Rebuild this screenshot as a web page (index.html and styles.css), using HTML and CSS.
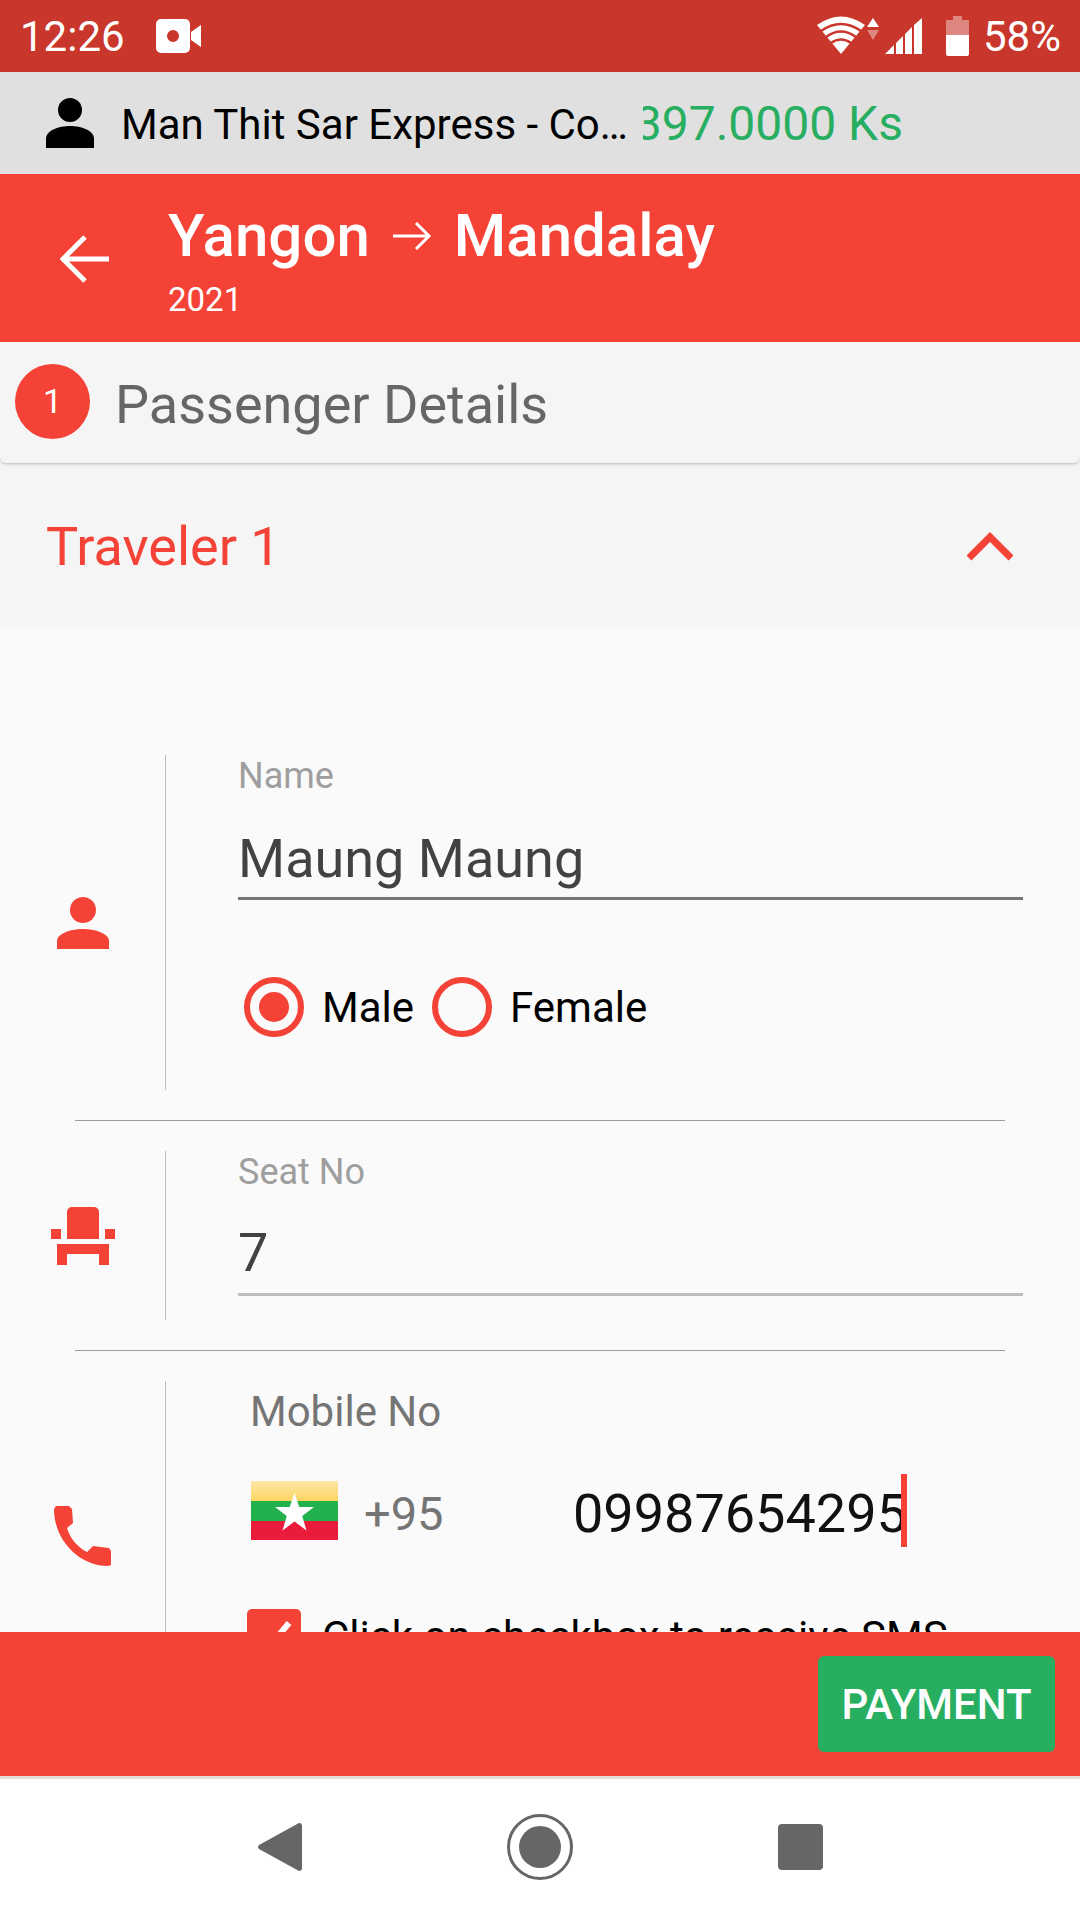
FILE: index.html
```html
<!DOCTYPE html>
<html lang="en">
<head>
    <meta charset="UTF-8">
    <meta name="viewport" content="width=device-width, initial-scale=1.0">
    <title>Passenger Details</title>
    <link rel="stylesheet" href="styles.css">
</head>
<body>
    <div class="phone">
        <div class="status-bar">
            <span class="clock">12:26</span>
            <svg class="video-icon" width="46" height="34" viewBox="0 0 46 34">
                <path fill="#fff" fill-rule="evenodd" d="M5 0h24a5 5 0 0 1 5 5v24a5 5 0 0 1-5 5H5a5 5 0 0 1-5-5V5a5 5 0 0 1 5-5zM17 11a6 6 0 1 0 0 12 6 6 0 0 0 0-12z"/>
                <path fill="#fff" d="M35 13l10-7v22l-10-7z"/>
            </svg>
            <div class="status-right">
                <svg width="62" height="40" viewBox="0 0 62 40">
                    <path fill="#fff" d="M0 9Q24-8 48 9L24 38z"/>
                    <path fill="none" stroke="#c9372c" stroke-width="2.5" d="M4 15Q24 1 44 15M9 21Q24 10 39 21M14 27Q24 20 34 27"/>
                    <path fill="#fff" d="M56 2l6 9H50z"/>
                    <path fill="#fff" opacity=".4" d="M50 14h12l-6 10z"/>
                </svg>
                <svg class="signal" width="37" height="36" viewBox="0 0 37 36">
                    <path fill="#fff" d="M0 36L9 27v9zM11 25l7-7v18h-7zM20 16l7-7v27h-7zM29 7l8-7v36h-8z"/>
                </svg>
                <svg class="battery" width="23" height="40" viewBox="0 0 23 40">
                    <path fill="#fff" opacity=".4" d="M7 0h9v4h7v15H0V4h7z"/>
                    <path fill="#fff" d="M0 19h23v19a2 2 0 0 1-2 2H2a2 2 0 0 1-2-2z"/>
                </svg>
                <span class="percent">58%</span>
            </div>
        </div>

        <div class="account-bar">
            <svg class="account-icon" width="50" height="50" viewBox="0 0 50 50">
                <ellipse cx="25" cy="12" rx="12" ry="12"/>
                <path d="M1 50V41C1 32 14 28 25 28S49 32 49 41V50z"/>
            </svg>
            <span class="account-name">Man Thit Sar Express - Co…</span>
            <div class="balance"><span>397.0000 Ks</span></div>
        </div>

        <div class="route-header">
            <svg class="back-arrow" width="50" height="48" viewBox="0 0 50 48">
                <path fill="none" stroke="#fff" stroke-width="5" d="M49 24H4M25 2L3 24l22 22"/>
            </svg>
            <div class="route-text">
                <div class="route-title">
                    <span>Yangon</span>
                    <svg width="40" height="30" viewBox="0 0 40 30">
                        <path fill="none" stroke="#fff" stroke-width="3" d="M1 15h36M24 2l13 13-13 13"/>
                    </svg>
                    <span>Mandalay</span>
                </div>
                <div class="route-date">2021</div>
            </div>
        </div>

        <div class="step-row">
            <span class="step-number">1</span>
            <span class="step-title">Passenger Details</span>
        </div>

        <div class="traveler-row">
            <span>Traveler 1</span>
            <svg width="46" height="30" viewBox="0 0 46 30">
                <path fill="none" stroke="#f44336" stroke-width="7" d="M2 27L23 6l21 21"/>
            </svg>
        </div>

        <div class="form-area">
            <div class="field-row">
                <div class="icon-col">
                    <svg width="54" height="52" viewBox="0 0 54 52">
                        <ellipse cx="27" cy="13" rx="13" ry="13" fill="#f44336"/>
                        <path fill="#f44336" d="M1 52V44C1 37 14 32 27 32s26 5 26 12v8z"/>
                    </svg>
                </div>
                <div class="field-body">
                    <div class="field-label">Name</div>
                    <div class="field-input dark-line">Maung Maung</div>
                    <div class="gender-row">
                        <span class="radio checked"></span>
                        <span class="radio-label">Male</span>
                        <span class="radio"></span>
                        <span class="radio-label">Female</span>
                    </div>
                </div>
            </div>

            <div class="row-line"></div>

            <div class="field-row seat-row">
                <div class="icon-col">
                    <svg width="64" height="58" viewBox="0 0 64 58">
                        <path fill="#f44336" d="M16 5a5 5 0 0 1 5-5h22a5 5 0 0 1 5 5v27H16zM0 22h10v10H0zM54 22h10v10H54zM6 37h52v21H48V47H16v11H6z"/>
                    </svg>
                </div>
                <div class="field-body">
                    <div class="field-label">Seat No</div>
                    <div class="field-input seat-input">7</div>
                </div>
            </div>

            <div class="row-line"></div>

            <div class="field-row mobile-row">
                <div class="icon-col">
                    <svg width="58" height="60" viewBox="0 0 58 60">
                        <path fill="#f44336" d="M2 0h13l3 3 1 14-6 5c3 10 10 19 20 24l6-6 16 2 2 3v14l-3 1C25 60 0 34 0 3z"/>
                    </svg>
                </div>
                <div class="mobile-body">
                    <div class="mobile-label">Mobile No</div>
                    <div class="phone-line">
                        <svg class="flag" width="87" height="59" viewBox="0 0 87 59">
                            <defs>
                                <linearGradient id="flagTop" x1="0" y1="0" x2="0" y2="1">
                                    <stop offset="0" stop-color="#fde7a8"/>
                                    <stop offset="1" stop-color="#fcd560"/>
                                </linearGradient>
                            </defs>
                            <rect width="87" height="20" fill="url(#flagTop)"/>
                            <rect y="20" width="87" height="20" fill="#22b14c"/>
                            <rect y="40" width="87" height="19" fill="#ea1c3c"/>
                            <path fill="#fff" d="M43.500 12l4.800 14h14.700l-11.800 9 4.300 14.500-12-9-12 9 4.300-14.500-11.800-9h14.700z"/>
                        </svg>
                        <span class="dial-code">+95</span>
                        <span class="phone-number">09987654295</span>
                        <span class="caret"></span>
                    </div>
                    <div class="sms-row">
                        <span class="checkbox">
                            <svg width="54" height="54" viewBox="0 0 54 54">
                                <path fill="none" stroke="#fff" stroke-width="6" d="M12 28l10 10 20-24"/>
                            </svg>
                        </span>
                        <span class="sms-text">Click on checkbox to receive SMS</span>
                    </div>
                </div>
            </div>
        </div>

        <div class="footer-bar">
            <button type="button" class="pay-button">PAYMENT</button>
        </div>

        <div class="nav-bar">
            <svg width="44" height="48" viewBox="0 0 44 48">
                <path fill="#666" d="M41 0q3 0 3 3v42q0 3-3 3L1 26q-2-2 0-4z"/>
            </svg>
            <svg width="66" height="66" viewBox="0 0 66 66">
                <circle cx="33" cy="33" r="31.500" fill="none" stroke="#666" stroke-width="3"/>
                <circle cx="33" cy="33" r="21" fill="#666"/>
            </svg>
            <span class="nav-square"></span>
        </div>
    </div>
</body>
</html>
```

FILE: styles.css
```css
body {
    margin: 0;
    padding: 0;
    font-family: Roboto, "Liberation Sans", sans-serif;
    background-color: #fafafa;
}
.phone {
    width: 1080px;
    height: 1920px;
    display: flex;
    flex-direction: column;
    overflow: hidden;
}
.status-bar {
    height: 72px;
    flex: none;
    background-color: #c9372c;
    color: #fff;
    display: flex;
    align-items: center;
    padding: 0 19px 0 20px;
    box-sizing: border-box;
}
.clock {
    font-size: 42px;
}
.video-icon {
    margin-left: 31px;
}
.status-right {
    margin-left: auto;
    display: flex;
    align-items: center;
}
.signal {
    margin-left: 6px;
}
.battery {
    margin-left: 24px;
}
.percent {
    font-size: 42px;
    margin-left: 14px;
}
.account-bar {
    height: 102px;
    flex: none;
    background-color: #e0e0e0;
    display: flex;
    align-items: center;
    padding-left: 45px;
    box-sizing: border-box;
}
.account-name {
    font-size: 42px;
    color: #000;
    margin-left: 26px;
    margin-top: 2px;
    width: 522px;
    white-space: nowrap;
}
.balance {
    width: 260px;
    overflow: hidden;
    display: flex;
    justify-content: flex-end;
    font-size: 48px;
    color: #27ae60;
    white-space: nowrap;
}
.route-header {
    height: 168px;
    flex: none;
    background-color: #f44336;
    color: #fff;
    display: flex;
    align-items: center;
    padding-left: 60px;
    box-sizing: border-box;
}
.back-arrow {
    margin-right: 58px;
    margin-top: 2px;
}
.route-text {
    margin-top: 8px;
}
.route-title {
    display: flex;
    align-items: center;
    gap: 22px;
    font-size: 60px;
    font-weight: 500;
    line-height: 66px;
}
.route-date {
    font-size: 33px;
    line-height: 44px;
    margin-top: 9px;
}
.step-row {
    height: 120px;
    flex: none;
    margin-top: 1px;
    background-color: #f5f5f5;
    border-radius: 0 0 6px 6px;
    box-shadow: 0 1px 3px rgba(0, 0, 0, 0.25);
    display: flex;
    align-items: center;
    padding: 0 15px 4px;
    box-sizing: border-box;
    position: relative;
}
.step-number {
    width: 75px;
    height: 75px;
    border-radius: 50%;
    background-color: #f44336;
    color: #fff;
    font-size: 34px;
    display: flex;
    align-items: center;
    justify-content: center;
}
.step-title {
    font-size: 54px;
    color: #666;
    margin-left: 25px;
    margin-top: 6px;
}
.traveler-row {
    height: 164px;
    flex: none;
    background-color: #f5f5f5;
    color: #f44336;
    font-size: 54px;
    display: flex;
    align-items: center;
    justify-content: space-between;
    padding: 2px 67px 0 46px;
    box-sizing: border-box;
}
.form-area {
    flex: 1;
    min-height: 0;
    overflow: hidden;
    padding-top: 128px;
    background-color: #fafafa;
}
.field-row {
    display: flex;
    height: 335px;
}
.seat-row {
    height: 169px;
}
.mobile-row {
    height: 310px;
}
.icon-col {
    width: 166px;
    flex: none;
    box-sizing: border-box;
    border-right: 1px solid #bdbdbd;
    display: flex;
    align-items: center;
    justify-content: center;
}
.field-body {
    flex: 1;
    padding: 0 57px 0 72px;
}
.field-label {
    font-size: 36px;
    line-height: 42px;
    color: #9e9e9e;
}
.field-input {
    margin-top: 32px;
    height: 71px;
    box-sizing: border-box;
    border-bottom: 3px solid #bdbdbd;
    font-size: 54px;
    line-height: 60px;
    color: #424242;
}
.seat-input {
    line-height: 56px;
}
.dark-line {
    border-bottom-color: #757575;
}
.gender-row {
    display: flex;
    align-items: center;
    margin-top: 77px;
    padding-left: 6px;
}
.radio {
    width: 60px;
    height: 60px;
    box-sizing: border-box;
    border: 6px solid #f44336;
    border-radius: 50%;
    display: flex;
    align-items: center;
    justify-content: center;
}
.radio.checked::after {
    content: "";
    width: 30px;
    height: 30px;
    border-radius: 50%;
    background-color: #f44336;
}
.radio-label {
    font-size: 42px;
    color: #000;
    margin: 0 18px;
}
.row-line {
    height: 1px;
    margin: 30px 75px;
    background-color: #9e9e9e;
}
.mobile-body {
    flex: 1;
    padding: 8px 0 0 84px;
}
.mobile-label {
    font-size: 42px;
    line-height: 46px;
    color: #757575;
}
.phone-line {
    display: flex;
    align-items: center;
    height: 73px;
    margin-top: 39px;
}
.flag {
    margin-left: 1px;
}
.dial-code {
    font-size: 47px;
    color: #757575;
    margin-left: 26px;
    margin-top: 6px;
    width: 209px;
}
.phone-number {
    font-size: 54px;
    color: #111;
    margin-top: 6px;
}
.caret {
    width: 6px;
    height: 73px;
    background-color: #f44336;
    margin-left: -6px;
}
.sms-row {
    display: flex;
    align-items: center;
    margin-top: 62px;
    margin-left: -3px;
}
.checkbox {
    width: 54px;
    height: 54px;
    flex: none;
    border-radius: 5px;
    background-color: #f44336;
}
.checkbox svg {
    display: block;
}
.sms-text {
    font-size: 42px;
    color: #000;
    margin-left: 21px;
    white-space: nowrap;
}
.footer-bar {
    height: 144px;
    flex: none;
    background-color: #f44336;
    display: flex;
    align-items: center;
    justify-content: flex-end;
    padding-right: 25px;
    box-sizing: border-box;
}
.pay-button {
    width: 237px;
    height: 96px;
    border: none;
    border-radius: 6px;
    background-color: #27ae60;
    color: #fff;
    font-family: Roboto, sans-serif;
    font-size: 42px;
    font-weight: 500;
    padding: 0;
}
.nav-bar {
    height: 144px;
    flex: none;
    box-sizing: border-box;
    border-top: 3px solid #e2dcd8;
    background-color: #fff;
    display: flex;
    align-items: center;
    padding: 0 0 5px 258px;
    gap: 205px;
}
.nav-square {
    width: 45px;
    height: 46px;
    border-radius: 4px;
    background-color: #666;
}
```
